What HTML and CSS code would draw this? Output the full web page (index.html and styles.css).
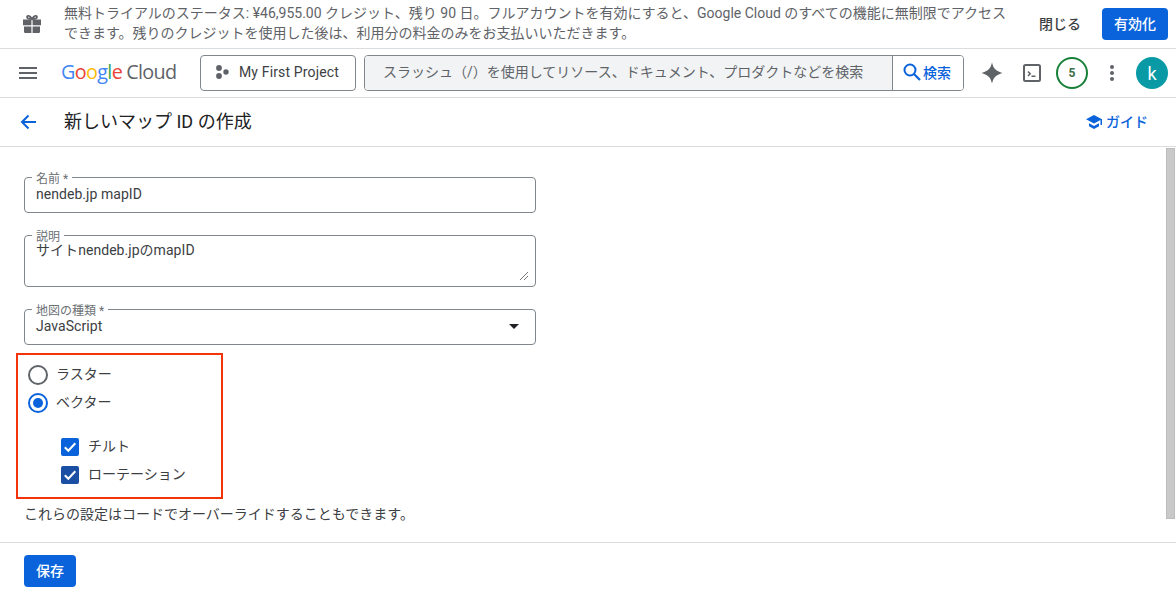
FILE: index.html
```html
<!DOCTYPE html>
<html lang="ja">
<head>
<meta charset="utf-8">
<title>新しいマップ ID の作成</title>
<link rel="stylesheet" href="styles.css">
</head>
<body>
<div class="banner">
  <svg class="gift" viewBox="0 0 24 24" width="24" height="24"><path fill="#5f6368" d="M3 7.500h8.400v5.800H3zM12.600 7.500H21v5.800h-8.400zM4 14.500h7.400V21H5.200A1.200 1.200 0 0 1 4 19.800zM12.600 14.500H20v5.300a1.200 1.200 0 0 1-1.200 1.200h-6.200z"/><path fill="none" stroke="#5f6368" stroke-width="1.800" d="M12 7C10 3.500 7 3 7 5c0 1.500 2.500 2 5 2 2.500 0 5-.5 5-2 0-2-3-1.500-5 2z"/></svg>
  <p class="banner-text">無料トライアルのステータス: ¥46,955.00 クレジット、残り 90 日。フルアカウントを有効にすると、Google Cloud のすべての機能に無制限でアクセスできます。残りのクレジットを使用した後は、利用分の料金のみをお支払いいただきます。</p>
  <span class="close-text">閉じる</span>
  <button class="primary activate">有効化</button>
</div>
<header class="topbar">
  <svg class="menu" viewBox="0 0 18 12" width="18" height="12"><path fill="#5f6368" d="M0 0h18v2H0zM0 5h18v2H0zM0 10h18v2H0z"/></svg>
  <div class="logo"><span class="lb">G</span><span class="lr">o</span><span class="ly">o</span><span class="lb">g</span><span class="lg">l</span><span class="lr">e</span><span class="cloud">Cloud</span></div>
  <button class="project">
    <svg viewBox="0 0 14 14" width="14" height="14"><circle cx="4" cy="3" r="2.900" fill="#5f6368"/><circle cx="4" cy="11" r="2.900" fill="#5f6368"/><circle cx="11" cy="7" r="2.700" fill="#5f6368"/></svg>
    <span>My First Project</span>
  </button>
  <div class="search">
    <div class="search-input">スラッシュ（/）を使用してリソース、ドキュメント、プロダクトなどを検索</div>
    <div class="search-btn">
      <svg viewBox="0 0 18 18" width="18" height="18"><circle cx="7" cy="7" r="5.500" fill="none" stroke="#0b63dc" stroke-width="2"/><path stroke="#0b63dc" stroke-width="2.200" d="M11 11l6 6"/></svg>
      <span>検索</span>
    </div>
  </div>
  <div class="tools">
    <svg class="spark" viewBox="0 0 24 24" width="24" height="24"><path fill="#5f6368" d="M12 1.500c.6 2.500 1.500 5 3 6.500s4.500 3.200 7.500 4c-3 .8-6 2.500-7.500 4s-2.400 4-3 6.500c-.6-2.500-1.500-5-3-6.500S4.500 12.800 1.500 12C4.500 11.200 7.500 9.500 9 8s2.400-4 3-6.500z"/></svg>
    <svg class="term" viewBox="0 0 18 18" width="18" height="18"><rect x="1" y="1" width="16" height="16" rx="1.500" fill="none" stroke="#5f6368" stroke-width="2"/><path fill="none" stroke="#5f6368" stroke-width="1.500" d="M5 7.500l2.200 2.200L5 12M8.500 12.300h4"/></svg>
    <div class="badge">5</div>
    <svg class="dots" viewBox="0 0 4 16" width="4" height="16"><circle cx="2" cy="2" r="2" fill="#5f6368"/><circle cx="2" cy="8" r="2" fill="#5f6368"/><circle cx="2" cy="14" r="2" fill="#5f6368"/></svg>
    <div class="avatar">k</div>
  </div>
</header>
<div class="subbar">
  <svg class="back" viewBox="0 0 16 16" width="16" height="16"><path fill="none" stroke="#0b63dc" stroke-width="2" d="M16 8H2M8.500 1.500L2 8l6.500 6.500"/></svg>
  <h1>新しいマップ ID の作成</h1>
  <div class="guide">
    <svg viewBox="0 0 16 14" width="16" height="14"><path fill="#0b63dc" d="M8 0L0 4.300 8 8.600l6.500-3.500V10H16V4.300zM3 8.200v3L8 14l5-2.800v-3L8 11z"/></svg>
    <span>ガイド</span>
  </div>
</div>
<main class="content">
  <div class="scroll-thumb"></div>
  <div class="field single">
    <label class="float">名前 *</label>
    <div class="value">nendeb.jp mapID</div>
  </div>
  <div class="field area">
    <label class="float">説明</label>
    <div class="value">サイトnendeb.jpのmapID</div>
    <svg class="grip" viewBox="0 0 8 8" width="8" height="8"><path stroke="#777" stroke-width="1" d="M0 8l8-8M4 8l4-4"/></svg>
  </div>
  <div class="field single select">
    <label class="float">地図の種類 *</label>
    <div class="value">JavaScript</div>
    <svg class="caret" viewBox="0 0 10 5" width="10" height="5"><path fill="#202124" d="M0 0h10L5 5z"/></svg>
  </div>
  <div class="highlight">
    <div class="radio-row">
      <span class="radio"></span><span>ラスター</span>
    </div>
    <div class="radio-row">
      <span class="radio on"></span><span>ベクター</span>
    </div>
    <div class="check-row first">
      <span class="check"><svg viewBox="0 0 18 18" width="18" height="18"><path fill="none" stroke="#fff" stroke-width="2" d="M3.800 9.200l3.500 3.500 7-7.500"/></svg></span><span>チルト</span>
    </div>
    <div class="check-row">
      <span class="check dark"><svg viewBox="0 0 18 18" width="18" height="18"><path fill="none" stroke="#fff" stroke-width="2" d="M3.800 9.200l3.500 3.500 7-7.500"/></svg></span><span>ローテーション</span>
    </div>
  </div>
  <p class="note">これらの設定はコードでオーバーライドすることもできます。</p>
</main>
<footer class="footer">
  <button class="primary save">保存</button>
</footer>
</body>
</html>
```
FILE: styles.css
```css
* { box-sizing: border-box; }
html, body { margin: 0; height: 598px; overflow: hidden; }
body {
  background: #fff;
  color: #202124;
  font-family: Roboto, "Noto Sans CJK JP", sans-serif;
  font-size: 14px;
  display: flex;
  flex-direction: column;
}
button { font-family: inherit; cursor: pointer; }

.banner {
  height: 49px;
  flex: none;
  display: flex;
  align-items: center;
  padding: 0 8px 1px 20px;
  border-bottom: 1px solid #dadce0;
}
.gift { flex: none; }
.banner-text {
  margin: 0 0 2px 20px;
  width: 948px;
  color: #5f6368;
  font-size: 14px;
  line-height: 20px;
}
.close-text { margin-left: 27px; padding-bottom: 2px; color: #3c4043; font-weight: 500; }
.primary {
  background: #0b63dc;
  color: #fff;
  border: 0;
  border-radius: 4px;
  font-size: 14px;
  font-weight: 500;
  padding: 0 0 2px;
}
.activate { width: 66px; height: 32px; margin-left: 21px; flex: none; }

.topbar {
  height: 49px;
  flex: none;
  display: flex;
  align-items: center;
  padding: 0 8px 0 19px;
  border-bottom: 1px solid #dadce0;
}
.menu { flex: none; }
.logo {
  margin-left: 24px;
  width: 117px;
  padding-bottom: 4px;
  font-family: "Open Sans", sans-serif;
  font-size: 19.800px;
  letter-spacing: -.65px;
  white-space: nowrap;
  flex: none;
}
.lb { color: #4285f4; }
.lr { color: #ea4335; }
.ly { color: #fbbc04; }
.lg { color: #34a853; }
.cloud { color: #5f6368; margin-left: 4px; }
.project {
  margin-left: 22px;
  width: 156px;
  height: 36px;
  flex: none;
  display: flex;
  align-items: center;
  gap: 10px;
  padding: 0 0 2px 14px;
  background: #fff;
  border: 1px solid #80868b;
  border-radius: 4px;
  font-size: 14px;
  color: #3c4043;
  letter-spacing: .15px;
}
.search {
  margin-left: 8px;
  width: 600px;
  height: 36px;
  flex: none;
  display: flex;
  border: 1px solid #80868b;
  border-radius: 4px;
  overflow: hidden;
}
.search-input {
  flex: 1;
  background: #f1f3f4;
  color: #5f6368;
  line-height: 32px;
  padding-left: 18px;
  white-space: nowrap;
  overflow: hidden;
}
.search-btn {
  width: 71px;
  flex: none;
  display: flex;
  align-items: center;
  gap: 2px;
  padding: 0 0 2px 10px;
  border-left: 1px solid #80868b;
  color: #0b63dc;
  font-weight: 500;
  background: #fff;
}
.tools { display: flex; align-items: center; margin-left: 16px; }
.term { margin-left: 19px; }
.badge {
  margin-left: 15px;
  width: 32px;
  height: 32px;
  border: 2px solid #188038;
  border-radius: 50%;
  display: flex;
  align-items: center;
  justify-content: center;
  font-size: 12px;
  font-weight: 700;
  color: #3c6e47;
}
.dots { margin-left: 22px; }
.avatar {
  margin-left: 22px;
  width: 32px;
  height: 32px;
  border-radius: 50%;
  background: #0a9aa5;
  color: #fff;
  font-size: 18px;
  display: flex;
  align-items: center;
  justify-content: center;
}

.subbar {
  height: 49px;
  flex: none;
  display: flex;
  align-items: center;
  padding: 0 28px 0 20px;
  border-bottom: 1px solid #dadce0;
}
.subbar h1 {
  margin: 0 0 0 28px;
  font-size: 18px;
  font-weight: 400;
  line-height: 24px;
  color: #202124;
}
.guide {
  margin-left: auto;
  display: flex;
  align-items: center;
  gap: 4px;
  color: #0b63dc;
  font-size: 14px;
  font-weight: 500;
  padding-bottom: 1px;
}
.guide span { padding-bottom: 2px; }

.content {
  position: relative;
  flex: 1;
  padding: 30px 0 0 24px;
  border-bottom: 1px solid #dadce0;
}
.scroll-thumb {
  position: absolute;
  top: 1px;
  right: 1px;
  width: 9px;
  height: 371px;
  background: #c9c9c9;
  border: 1px solid #bdbdbd;
}
.field {
  position: relative;
  width: 512px;
  border: 1px solid #80868b;
  border-radius: 4px;
  padding: 8px 11px 0;
}
.single { height: 36px; margin-bottom: 22px; }
.area { height: 52px; margin-bottom: 22px; padding-top: 6px; }
.select { margin-bottom: 8px; }
.float {
  position: absolute;
  top: -5px;
  left: 7px;
  padding: 0 4px;
  background: #fff;
  font-size: 12px;
  line-height: 12px;
  color: #6b7074;
}
.value { position: relative; font-size: 14px; line-height: 16px; color: #3c4043; letter-spacing: .05px; }
.grip { position: absolute; right: 7px; bottom: 6px; }
.caret { position: absolute; right: 16px; top: 14px; }

.highlight {
  width: 207px;
  height: 146px;
  margin-left: -8px;
  border: 2px solid #f4330a;
  padding: 6px 0 0 10px;
  color: #3c4043;
}
.radio-row { height: 28px; display: flex; align-items: center; gap: 8px; }
.radio-row > span:last-child { position: relative; top: -2px; }
.radio {
  width: 20px;
  height: 20px;
  border: 2px solid #5f6368;
  border-radius: 50%;
  flex: none;
  display: flex;
  align-items: center;
  justify-content: center;
}
.radio.on { border-color: #0b63dc; }
.radio.on::after {
  content: "";
  width: 10px;
  height: 10px;
  border-radius: 50%;
  background: #0b63dc;
}
.check-row {
  height: 28px;
  display: flex;
  align-items: center;
  gap: 9px;
  padding-left: 33px;
}
.check-row > span:last-child { padding-bottom: 5px; }
.check-row.first { margin-top: 16px; }
.check {
  width: 18px;
  height: 18px;
  border-radius: 2px;
  background: #0b63dc;
  flex: none;
  display: flex;
}
.check.dark { background: #1a4fa3; }
.note { margin: 5px 0 0; line-height: 20px; color: #3c4043; }

.footer {
  height: 55px;
  flex: none;
  padding: 12px 0 0 24px;
}
.save { width: 52px; height: 32px; display: block; }
```
